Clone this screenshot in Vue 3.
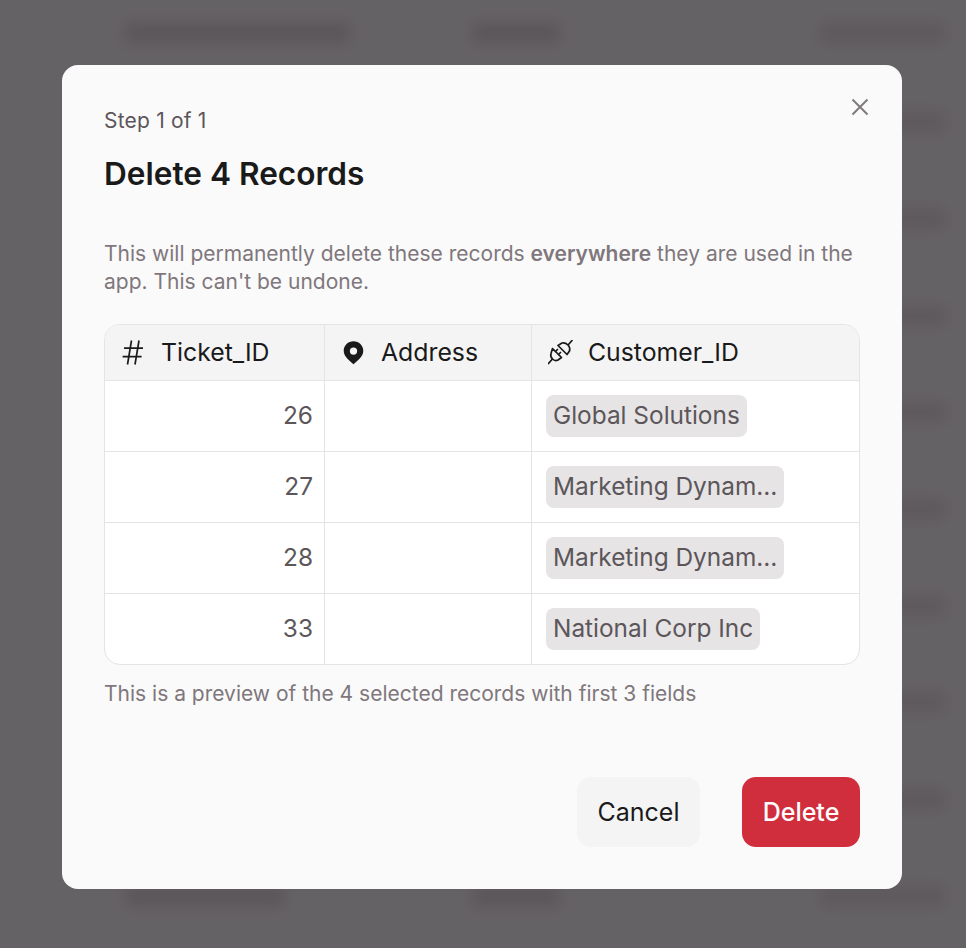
<script setup>
const bgRows = [
  { name: 'Marketing Dynamics', w: 225 },
  { name: 'National Corp', w: 190 },
  { name: 'Global Solutions', w: 200 },
  { name: 'Marketing Dynamics', w: 225 },
  { name: 'National Corp', w: 190 },
  { name: 'Global Solutions', w: 200 },
  { name: 'Marketing Dynamics', w: 225 },
  { name: 'National Corp', w: 190 },
  { name: 'Global Solutions', w: 200 },
  { name: 'Global Corp', w: 160 }
];

const rows = [
  { id: 26, customer: 'Global Solutions' },
  { id: 27, customer: 'Marketing Dynam…' },
  { id: 28, customer: 'Marketing Dynam…' },
  { id: 33, customer: 'National Corp Inc' }
];
</script>

<template>
  <div class="page">
    <div class="bg-table">
      <div v-for="(row, i) in bgRows" :key="i" class="bg-row">
        <span class="bg-cell" :style="{ width: row.w + 'px' }"></span>
        <span class="bg-cell mid"></span>
        <span class="bg-cell end"></span>
      </div>
    </div>

    <div class="overlay">
      <div class="modal">
        <button class="close" aria-label="Close">
          <svg width="20" height="20" viewBox="0 0 20 20" fill="none" stroke="#7f7a7e" stroke-width="2">
            <path d="M2.5 2.5l15 15M17.5 2.5l-15 15" />
          </svg>
        </button>

        <div class="step">Step 1 of 1</div>
        <h2 class="title">Delete 4 Records</h2>

        <p class="desc">
          This will permanently delete these records <b>everywhere</b> they are used in the app. This can't be undone.
        </p>

        <div class="table">
          <div class="row head">
            <div class="cell">
              <svg class="icon" viewBox="0 0 25 25" fill="none" stroke="#1a1a1a" stroke-width="1.7">
                <path d="M10.5 .5 6.5 24.5M18 .5 14 24.5M3 8.2h19M1.6 16.6h19" />
              </svg>
              <span>Ticket_ID</span>
            </div>
            <div class="cell">
              <svg class="icon" viewBox="0 0 24 24">
                <path fill="#1a1a1a" fill-rule="evenodd" d="M12 1.2c-5.2 0-9.4 4-9.4 9.2 0 5.6 5.8 10 9.4 12.8 3.6-2.8 9.4-7.2 9.4-12.8 0-5.2-4.2-9.2-9.4-9.2zm0 5.9a3.5 3.5 0 1 1 0 7 3.5 3.5 0 0 1 0-7z" />
              </svg>
              <span>Address</span>
            </div>
            <div class="cell">
              <svg class="icon" viewBox="0 0 25 25" fill="none" stroke="#1a1a1a" stroke-width="1.7" stroke-linejoin="round" stroke-linecap="round">
                <path d="M.5 23.5 4 19.5M24 .5 20.5 4.5" />
                <path d="M4.5 8.5 13.5 17.5 10 20Q7 21.5 4.5 19 2 16.5 3 13.5Z" />
                <path d="M10 5.5 19 14.5 21.5 11Q22.5 7.5 20 5 17.5 2.5 14 3Z" />
                <path d="M7.5 11.5 9.5 9.5M10.5 14.5 12.5 12.5" />
              </svg>
              <span>Customer_ID</span>
            </div>
          </div>
          <div v-for="row in rows" :key="row.id" class="row">
            <div class="cell num">{{ row.id }}</div>
            <div class="cell"></div>
            <div class="cell link"><span class="chip">{{ row.customer }}</span></div>
          </div>
        </div>

        <p class="note">This is a preview of the 4 selected records with first 3 fields</p>

        <div class="actions">
          <button class="btn cancel">Cancel</button>
          <button class="btn delete">Delete</button>
        </div>
      </div>
    </div>
  </div>
</template>

<style scoped>
.page {
  position: relative;
  width: 966px;
  height: 948px;
  overflow: hidden;
  background: #fff;
  font-family: Inter, "Liberation Sans", sans-serif;
}

.bg-table {
  display: flex;
  flex-direction: column;
  margin-top: -8px;
  filter: blur(7px);
}

.bg-row {
  display: grid;
  grid-template-columns: 347px 348px 1fr;
  align-items: center;
  height: 96.7px;
  padding-left: 125px;
  box-sizing: border-box;
}

.bg-row:first-child {
  height: 82px;
}

.bg-cell {
  height: 22px;
  background: #dfd8dc;
  display: block;
}

.bg-cell.mid {
  width: 88px;
}

.bg-cell.end {
  width: 125px;
  background: #e5e1e3;
}

.overlay {
  position: absolute;
  inset: 0;
  display: flex;
  align-items: center;
  justify-content: center;
  padding: 6px 2px 0 0;
  background: rgba(35, 32, 36, 0.7);
}

.modal {
  position: relative;
  box-sizing: border-box;
  width: 840px;
  height: 824px;
  padding: 42px;
  background: #fafafa;
  border-radius: 16px;
  display: flex;
  flex-direction: column;
}

.close {
  position: absolute;
  top: 32px;
  right: 32px;
  width: 20px;
  height: 20px;
  padding: 0;
  border: 0;
  background: none;
}

.close svg {
  display: block;
}

.step {
  font-size: 21px;
  line-height: 28px;
  letter-spacing: 0.2px;
  color: #5c565a;
}

.title {
  margin: 21px 0 0;
  font-size: 31.6px;
  line-height: 36px;
  font-weight: 600;
  color: #1a1a1a;
}

.desc {
  margin: 48px 0 0;
  font-size: 21px;
  line-height: 28px;
  color: #7f777c;
}

.desc b {
  font-weight: 600;
}

.table {
  margin-top: 28px;
  border: 1px solid #e5e4e5;
  border-radius: 16px;
  overflow: hidden;
  background: #fff;
}

.row {
  display: grid;
  grid-template-columns: 219px 207px 1fr;
  height: 71px;
  border-top: 1px solid #e5e4e5;
  box-sizing: border-box;
}

.row.head {
  height: 55px;
  border-top: 0;
  background: #f4f4f4;
}

.cell {
  display: flex;
  align-items: center;
  border-left: 1px solid #e5e4e5;
  font-size: 24.4px;
  color: #5c565a;
  box-sizing: border-box;
  min-width: 0;
}

.cell:first-child {
  border-left: 0;
}

.head .cell {
  gap: 15px;
  padding: 0 0 1px 16px;
  font-size: 24.8px;
  color: #1a1a1a;
}

.icon {
  width: 25px;
  height: 25px;
  flex-shrink: 0;
}

.cell.num {
  justify-content: flex-end;
  padding: 0 11px 2px 0;
}

.cell.link {
  padding-left: 14px;
}

.chip {
  padding: 0 7px;
  height: 42px;
  line-height: 40px;
  border-radius: 8px;
  background: #e6e4e5;
  white-space: nowrap;
}

.note {
  margin: 15px 0 0;
  font-size: 21px;
  line-height: 28px;
  color: #7f777c;
}

.actions {
  margin-top: auto;
  display: flex;
  justify-content: flex-end;
  gap: 42px;
}

.btn {
  height: 70px;
  border: 0;
  border-radius: 14px;
  font-family: inherit;
  font-size: 25px;
}

.cancel {
  width: 123px;
  background: #f4f4f4;
  color: #1a1a1a;
}

.delete {
  width: 118px;
  background: #d12e3d;
  color: #fff;
  font-weight: 500;
}
</style>
